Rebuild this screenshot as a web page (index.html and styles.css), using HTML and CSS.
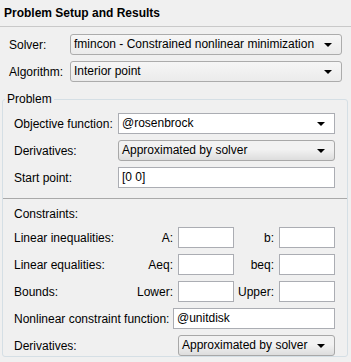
FILE: index.html
```html
<!DOCTYPE html>
<html lang="en">
<head>
    <meta charset="UTF-8">
    <title>Problem Setup and Results</title>
    <link rel="stylesheet" href="styles.css">
</head>
<body>
    <div class="header">Problem Setup and Results</div>

    <div class="setup">
        <div class="row">
            <span class="label">Solver:</span>
            <div class="combo">fmincon - Constrained nonlinear minimization<span class="arrow"></span></div>
        </div>
        <div class="row">
            <span class="label">Algorithm:</span>
            <div class="combo">Interior point<span class="arrow"></span></div>
        </div>
    </div>

    <fieldset class="group">
        <legend>Problem</legend>
        <div class="section problem">
            <div class="row">
                <span class="label">Objective function:</span>
                <div class="combo editable">@rosenbrock<span class="arrow"></span></div>
            </div>
            <div class="row">
                <span class="label">Derivatives:</span>
                <div class="combo button">Approximated by solver<span class="arrow"></span></div>
            </div>
            <div class="row">
                <span class="label">Start point:</span>
                <div class="field">[0 0]</div>
            </div>
        </div>

        <div class="section constraints">
            <div class="caption">Constraints:</div>
            <div class="grid">
                <span>Linear inequalities:</span>
                <span class="sub">A:</span><div class="field"></div>
                <span class="sub">b:</span><div class="field"></div>

                <span>Linear equalities:</span>
                <span class="sub">Aeq:</span><div class="field"></div>
                <span class="sub">beq:</span><div class="field"></div>

                <span>Bounds:</span>
                <span class="sub">Lower:</span><div class="field"></div>
                <span class="sub">Upper:</span><div class="field"></div>
            </div>
            <div class="row">
                <span>Nonlinear constraint function:</span>
                <div class="field nonlin">@unitdisk</div>
            </div>
            <div class="row">
                <span>Derivatives:</span>
                <div class="combo button deriv">Approximated by solver<span class="arrow"></span></div>
            </div>
        </div>
    </fieldset>
</body>
</html>
```

FILE: styles.css
```css
body {
    margin: 0;
    width: 351px;
    height: 362px;
    overflow: hidden;
    background-color: #f0f0f0;
    font-family: "Liberation Sans", Arial, sans-serif;
    font-size: 12px;
    color: #000;
}
.header {
    height: 26px;
    line-height: 26px;
    padding-left: 4px;
    font-weight: bold;
    border-bottom: 1px solid #c9c9c9;
}
.setup {
    padding: 7px 9px 0 9px;
    display: flex;
    flex-direction: column;
    gap: 6px;
}
.row {
    display: flex;
    align-items: center;
    height: 21px;
}
.setup .label {
    width: 61px;
}
.combo {
    position: relative;
    flex: 1;
    height: 19px;
    line-height: 19px;
    padding-left: 3px;
    border: 1px solid #acacac;
    border-radius: 3px;
    background: linear-gradient(#f6f6f6, #ebebeb);
    white-space: nowrap;
}
.combo.editable {
    border-radius: 0;
    border-color: #abadb3;
    background: #fff;
}
.combo.button {
    background: linear-gradient(#f2f2f2 45%, #dddddd);
    border-color: #a8a8a8;
}
.arrow {
    position: absolute;
    right: 9px;
    top: 8px;
    width: 0;
    height: 0;
    border-left: 4px solid transparent;
    border-right: 4px solid transparent;
    border-top: 4px solid #000;
}
.field {
    box-sizing: border-box;
    height: 21px;
    line-height: 19px;
    padding-left: 3px;
    border: 1px solid #abadb3;
    background: #fff;
}
.group {
    margin: 10px 3px 0 2px;
    padding: 0;
    border: 1px solid #d5dfe5;
    border-radius: 3px;
}
.group legend {
    margin-left: 2px;
    padding: 0 2px;
    line-height: 14px;
}
.section {
    padding: 0 12px 0 11px;
}
.problem {
    padding-top: 7px;
    padding-bottom: 10px;
    display: flex;
    flex-direction: column;
    gap: 6px;
}
.problem .label {
    width: 104px;
}
.problem .combo,
.problem .field {
    flex: 1;
}
.constraints {
    border-top: 1px solid #a9a9a9;
    padding-top: 8px;
    display: flex;
    flex-direction: column;
    gap: 6px;
}
.caption {
    height: 14px;
    line-height: 14px;
}
.grid {
    display: grid;
    grid-template-columns: 104px 60px 56px 45px 56px;
    grid-auto-rows: 21px;
    row-gap: 6px;
    align-items: center;
}
.sub {
    text-align: right;
    padding-right: 5px;
}
.nonlin {
    width: 162px;
    margin-left: auto;
}
.deriv {
    flex: none;
    width: 152px;
    margin-left: auto;
}
```
